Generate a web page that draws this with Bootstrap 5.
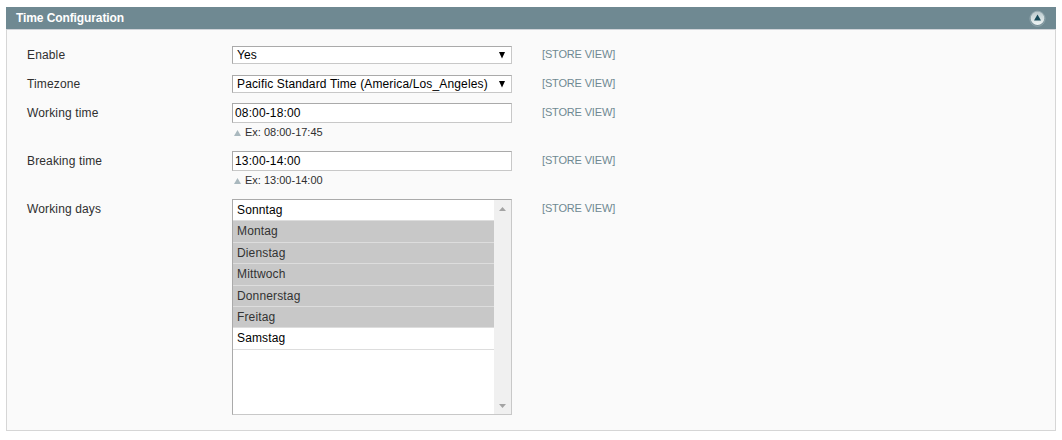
<!DOCTYPE html>
<html lang="en">
<head>
<meta charset="utf-8">
<meta name="viewport" content="width=device-width, initial-scale=1">
<title>Time Configuration</title>
<link href="https://cdn.jsdelivr.net/npm/bootstrap@5.3.0/dist/css/bootstrap.min.css" rel="stylesheet">
<style>
body{font:12px/16px "Liberation Sans",Arial,sans-serif;color:#2f2f2f;background:#fff}
.section{margin:7px 6px 0}
.section-head{height:22px;background:#6f8992;color:#fff;padding:0 10px}
.section-head h1{font-size:12px;line-height:22px;letter-spacing:-.1px}
.toggle{width:17px;height:17px}
.section-body{height:402px;background:#fafafa;border:1px solid #d6d6d6;border-top-color:#d0d3d8;padding:16px 20px 0}
.field{letter-spacing:.14px}
.f-label{width:205px;line-height:18px}
.f-value{width:280px;color:#000}
.f-scope{margin-left:30px;font-size:11px;line-height:17px;color:#6f8992;letter-spacing:-.16px}
.low .f-label,.low .f-scope{padding-top:1px}
.box{background:#fff;border:1px solid #c8c8c8;border-top-color:#aaa;border-left-color:#aaa}
.pick{height:18px;padding:0 6px 0 4px;line-height:17px}
.entry{height:20px;padding:0 2px;line-height:19px}
.note{font-size:11px;line-height:17px;color:#2f2f2f;padding:1px 0 0 2px;gap:4px;letter-spacing:0}
.h-sel{height:29px}.h-sel2{height:28px}.h-in{height:48px}
.days{height:216px}
.opt{height:21.4px;line-height:20.5px;padding-left:4px;border-bottom:1px solid #ddd}
.opt.on{background:#c8c8c8;color:#333}
.bar{width:17px;background:#f0f0f0;padding:7px 0 6px}
</style>
</head>
<body>
<main class="section">
  <header class="section-head d-flex align-items-center justify-content-between">
    <h1 class="m-0 fw-bold">Time Configuration</h1>
    <svg class="toggle" viewBox="0 0 17 17" aria-hidden="true"><defs><linearGradient id="g" x1="0" y1="0" x2="0" y2="1"><stop offset="0" stop-color="#b9c8cc"/><stop offset="1" stop-color="#f0f6f6"/></linearGradient></defs><circle cx="8.5" cy="8.7" r="7.6" fill="#6f8992" stroke="#91a6ad"/><circle cx="8.5" cy="8.2" r="6.8" fill="url(#g)"/><path d="M8.5 4.5 12 10.5H5z" fill="#174a59"/></svg>
  </header>
  <div class="section-body">
    <div class="field h-sel d-flex"><label class="f-label">Enable</label><div class="f-value"><div class="box pick d-flex align-items-center justify-content-between"><span>Yes</span><svg width="6" height="7" viewBox="0 0 6 7"><path d="M0 0H6L3 6.5z"/></svg></div></div><span class="f-scope">[STORE VIEW]</span></div>
    <div class="field h-sel2 d-flex"><label class="f-label">Timezone</label><div class="f-value"><div class="box pick d-flex align-items-center justify-content-between"><span>Pacific Standard Time (America/Los_Angeles)</span><svg width="6" height="7" viewBox="0 0 6 7"><path d="M0 0H6L3 6.5z"/></svg></div></div><span class="f-scope">[STORE VIEW]</span></div>
    <div class="field low h-in d-flex"><label class="f-label">Working time</label><div class="f-value"><div class="box entry">08:00-18:00</div><div class="note d-flex align-items-center"><svg width="7" height="6" viewBox="0 0 7 6"><path d="M3.5 0 7 6H0z" fill="#a9b8be"/></svg><span>Ex: 08:00-17:45</span></div></div><span class="f-scope">[STORE VIEW]</span></div>
    <div class="field low h-in d-flex"><label class="f-label">Breaking time</label><div class="f-value"><div class="box entry">13:00-14:00</div><div class="note d-flex align-items-center"><svg width="7" height="6" viewBox="0 0 7 6"><path d="M3.5 0 7 6H0z" fill="#a9b8be"/></svg><span>Ex: 13:00-14:00</span></div></div><span class="f-scope">[STORE VIEW]</span></div>
    <div class="field low d-flex"><label class="f-label">Working days</label><div class="f-value"><div class="box days d-flex">
      <div class="flex-grow-1">
        <div class="opt">Sonntag</div><div class="opt on">Montag</div><div class="opt on">Dienstag</div><div class="opt on">Mittwoch</div><div class="opt on">Donnerstag</div><div class="opt on">Freitag</div><div class="opt">Samstag</div>
      </div>
      <div class="bar d-flex flex-column align-items-center justify-content-between"><svg width="7" height="4" viewBox="0 0 7 4"><path d="M3.5 0 7 4H0z" fill="#a3a3a3"/></svg><svg width="7" height="4" viewBox="0 0 7 4"><path d="M0 0H7L3.5 4z" fill="#a3a3a3"/></svg></div>
    </div></div><span class="f-scope">[STORE VIEW]</span></div>
  </div>
</main>
<script src="https://cdn.jsdelivr.net/npm/bootstrap@5.3.0/dist/js/bootstrap.bundle.min.js"></script>
</body>
</html>
